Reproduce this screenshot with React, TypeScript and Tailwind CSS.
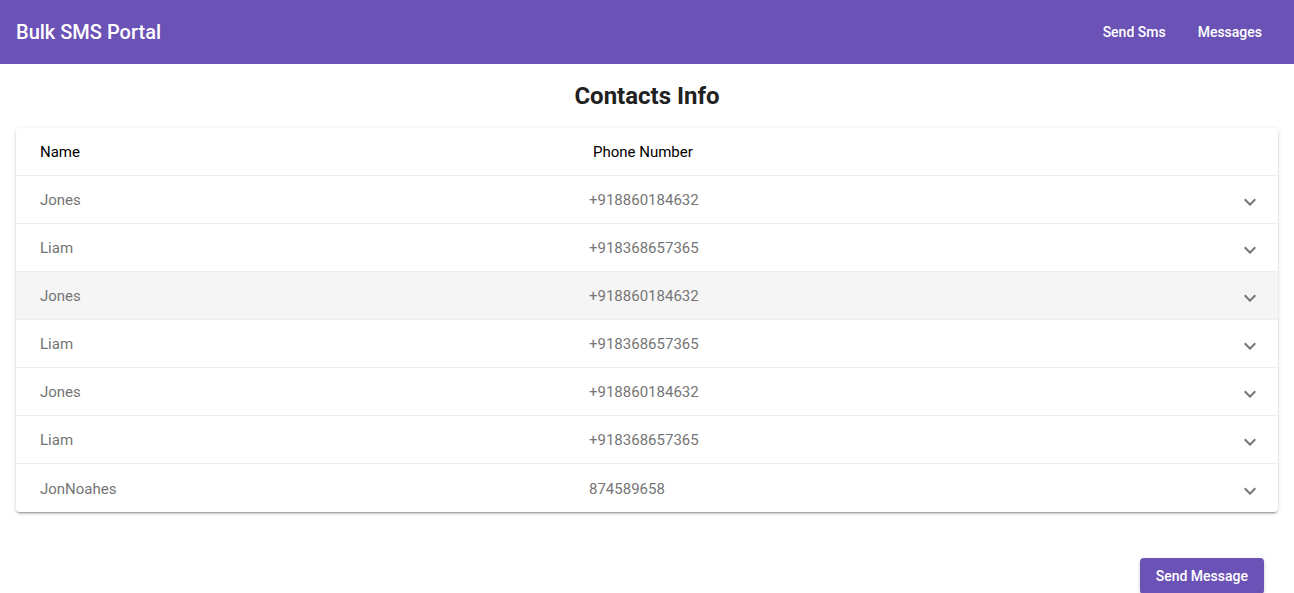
import { useState } from "react"

type Contact = { name: string; phone: string }

const contacts: Contact[] = [
  { name: "Jones", phone: "+918860184632" },
  { name: "Liam", phone: "+918368657365" },
  { name: "Jones", phone: "+918860184632" },
  { name: "Liam", phone: "+918368657365" },
  { name: "Jones", phone: "+918860184632" },
  { name: "Liam", phone: "+918368657365" },
  { name: "JonNoahes", phone: "874589658" },
]

function ExpandIcon() {
  return (
    <svg viewBox="0 0 24 24" className="w-6 h-6 fill-[#757575]">
      <path d="M16.59 8.59 12 13.17 7.41 8.59 6 10l6 6 6-6z" />
    </svg>
  )
}

export default function App() {
  // row 3 is shown hovered in the screenshot
  const [hovered, setHovered] = useState<number | null>(2)

  return (
    <div className="min-h-screen bg-white font-['Roboto',sans-serif]">
      <header className="h-16 bg-[#6b52b6] flex items-center justify-between pl-4 pr-4 text-white">
        <h2 className="text-[20px] font-medium">Bulk SMS Portal</h2>
        <nav className="flex">
          <button className="px-4 h-9 text-sm font-medium">Send Sms</button>
          <button className="px-4 h-9 text-sm font-medium">Messages</button>
        </nav>
      </header>

      <main className="px-4">
        <h1 className="text-center text-2xl font-bold leading-8 pt-4 pb-4 text-[#212121]">Contacts Info</h1>

        <div className="bg-white rounded shadow-[0_3px_1px_-2px_rgba(0,0,0,0.2),0_2px_2px_0_rgba(0,0,0,0.14),0_1px_5px_0_rgba(0,0,0,0.12)]">
          <div className="grid grid-cols-[573px_1fr_64px] h-12 items-center border-b border-[#eeeeee] text-[15px] text-black">
            <div className="pl-6 pt-[2px]">Name</div>
            <div className="pl-1 pt-[2px]">Phone Number</div>
            <div />
          </div>
          {contacts.map((c, i) => (
            <div
              key={i}
              onMouseEnter={() => setHovered(i)}
              className={`grid grid-cols-[573px_1fr_64px] h-12 items-center text-[15px] text-[#757575] ${
                i < contacts.length - 1 ? "border-b border-[#eeeeee]" : ""
              } ${hovered === i ? "bg-[#f5f5f5]" : ""}`}
            >
              <div className="pl-6 pt-[2px]">{c.name}</div>
              <div className="pt-[2px]">{c.phone}</div>
              <div className="flex justify-end pr-4 pt-[5px]">
                <ExpandIcon />
              </div>
            </div>
          ))}
        </div>

        <div className="flex justify-end pt-[46px] pr-[14px]">
          <button className="bg-[#6b52b6] text-white text-sm font-medium rounded h-9 px-4 shadow-[0_3px_1px_-2px_rgba(0,0,0,0.2),0_2px_2px_0_rgba(0,0,0,0.14),0_1px_5px_0_rgba(0,0,0,0.12)]">
            Send Message
          </button>
        </div>
      </main>
    </div>
  )
}
